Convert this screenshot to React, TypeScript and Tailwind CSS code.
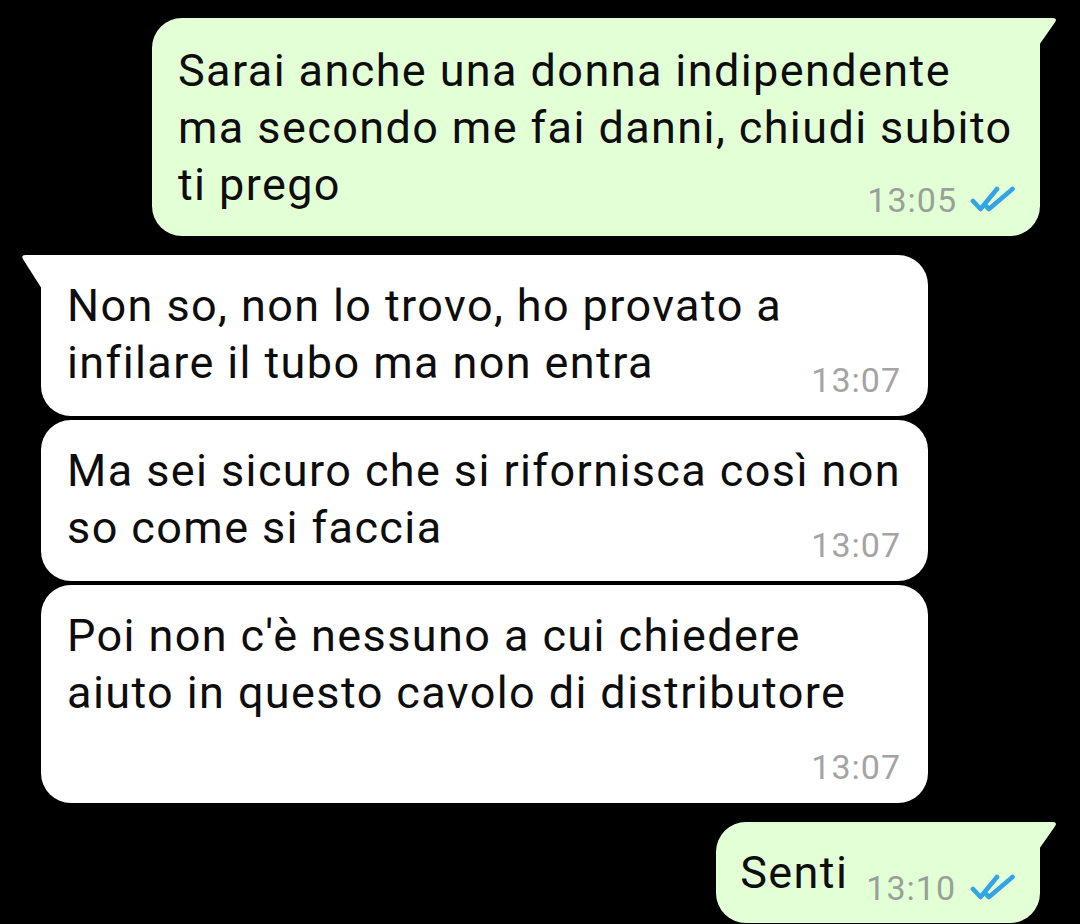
import React from "react";

const font = { fontFamily: "Roboto, 'Noto Sans', sans-serif" };

function Checks() {
  return (
    <svg width="46" height="28" viewBox="0 0 46 28" fill="none" className="shrink-0">
      <path d="M3 15 L10.5 23 L27 3" stroke="#33a5e6" strokeWidth="4.6" strokeLinecap="round" strokeLinejoin="round" />
      <path d="M16.5 20.5 L19 23 L42.5 3" stroke="#33a5e6" strokeWidth="4.6" strokeLinecap="round" strokeLinejoin="round" />
    </svg>
  );
}

function TailRight({ color }: { color: string }) {
  return (
    <svg width="22" height="32" viewBox="0 0 22 32" className="absolute top-0 right-[-19px]">
      <path d="M0 0 H15 Q21.5 0 17.5 5 L0 30 Z" fill={color} />
    </svg>
  );
}

function TailLeft({ color }: { color: string }) {
  return (
    <svg width="22" height="36" viewBox="0 0 22 36" className="absolute top-0 left-[-21px]">
      <path d="M22 0 H6 Q0 0 3.5 5 L22 34 Z" fill={color} />
    </svg>
  );
}

export default function App() {
  return (
    <div className="w-[1080px] h-[924px] bg-black overflow-hidden flex flex-col pt-[18px] text-[#0d0d0d]" style={font}>
      {/* Outgoing 1 */}
      <div className="relative self-end mr-[40px] w-[888px] rounded-[30px] rounded-tr-none bg-[#e3ffd6] pl-[26px] pr-[24px] pt-[24px] pb-[19px]">
        <div className="text-[45px] leading-[57px] tracking-[1.4px] whitespace-nowrap">
          Sarai anche una donna indipendente
          <br />
          ma secondo me fai danni, chiudi subito
          <br />
          ti prego
        </div>
        <div className="flex justify-end items-center gap-[13px] -mt-[30px] h-[34px]">
          <span className="text-[34px] leading-[34px] tracking-[1px] text-[#98a198]">13:05</span>
          <Checks />
        </div>
        <TailRight color="#e3ffd6" />
      </div>

      {/* Incoming 1 */}
      <div className="relative self-start ml-[41px] mt-[19px] w-[887px] rounded-[30px] rounded-tl-none bg-white pl-[26px] pr-[27px] pt-[22px] pb-[19px]">
        <div className="text-[45px] leading-[57px] tracking-[1.4px] whitespace-nowrap">
          Non so, non lo trovo, ho provato a
          <br />
          infilare il tubo ma non entra
        </div>
        <div className="flex justify-end items-center -mt-[28px] h-[34px]">
          <span className="text-[34px] leading-[34px] tracking-[1px] text-[#a4a4a4]">13:07</span>
        </div>
        <TailLeft color="#ffffff" />
      </div>

      {/* Incoming 2 */}
      <div className="self-start ml-[41px] mt-[4px] w-[887px] rounded-[30px] bg-white pl-[26px] pr-[27px] pt-[22px] pb-[19px]">
        <div className="text-[45px] leading-[57px] tracking-[1.4px] whitespace-nowrap">
          Ma sei sicuro che si rifornisca così non
          <br />
          so come si faccia
        </div>
        <div className="flex justify-end items-center -mt-[28px] h-[34px]">
          <span className="text-[34px] leading-[34px] tracking-[1px] text-[#a4a4a4]">13:07</span>
        </div>
      </div>

      {/* Incoming 3 */}
      <div className="self-start ml-[41px] mt-[4px] w-[887px] rounded-[30px] bg-white pl-[26px] pr-[27px] pt-[22px] pb-[19px]">
        <div className="text-[45px] leading-[57px] tracking-[1.4px] whitespace-nowrap">
          Poi non c'è nessuno a cui chiedere
          <br />
          aiuto in questo cavolo di distributore
        </div>
        <div className="flex justify-end items-center mt-[29px] h-[34px]">
          <span className="text-[34px] leading-[34px] tracking-[1px] text-[#a4a4a4]">13:07</span>
        </div>
      </div>

      {/* Outgoing 2 */}
      <div className="relative self-end mr-[40px] mt-[19px] rounded-[30px] rounded-tr-none bg-[#e3ffd6] pl-[24px] pr-[24px] pt-[22px] pb-[22px] flex items-end">
        <span className="text-[45px] leading-[57px] tracking-[1.4px] whitespace-nowrap">Senti</span>
        <div className="flex items-center gap-[14px] ml-[18px] h-[34px] -mb-[4px]">
          <span className="text-[34px] leading-[34px] tracking-[1px] text-[#98a198]">13:10</span>
          <Checks />
        </div>
        <TailRight color="#e3ffd6" />
      </div>
    </div>
  );
}
